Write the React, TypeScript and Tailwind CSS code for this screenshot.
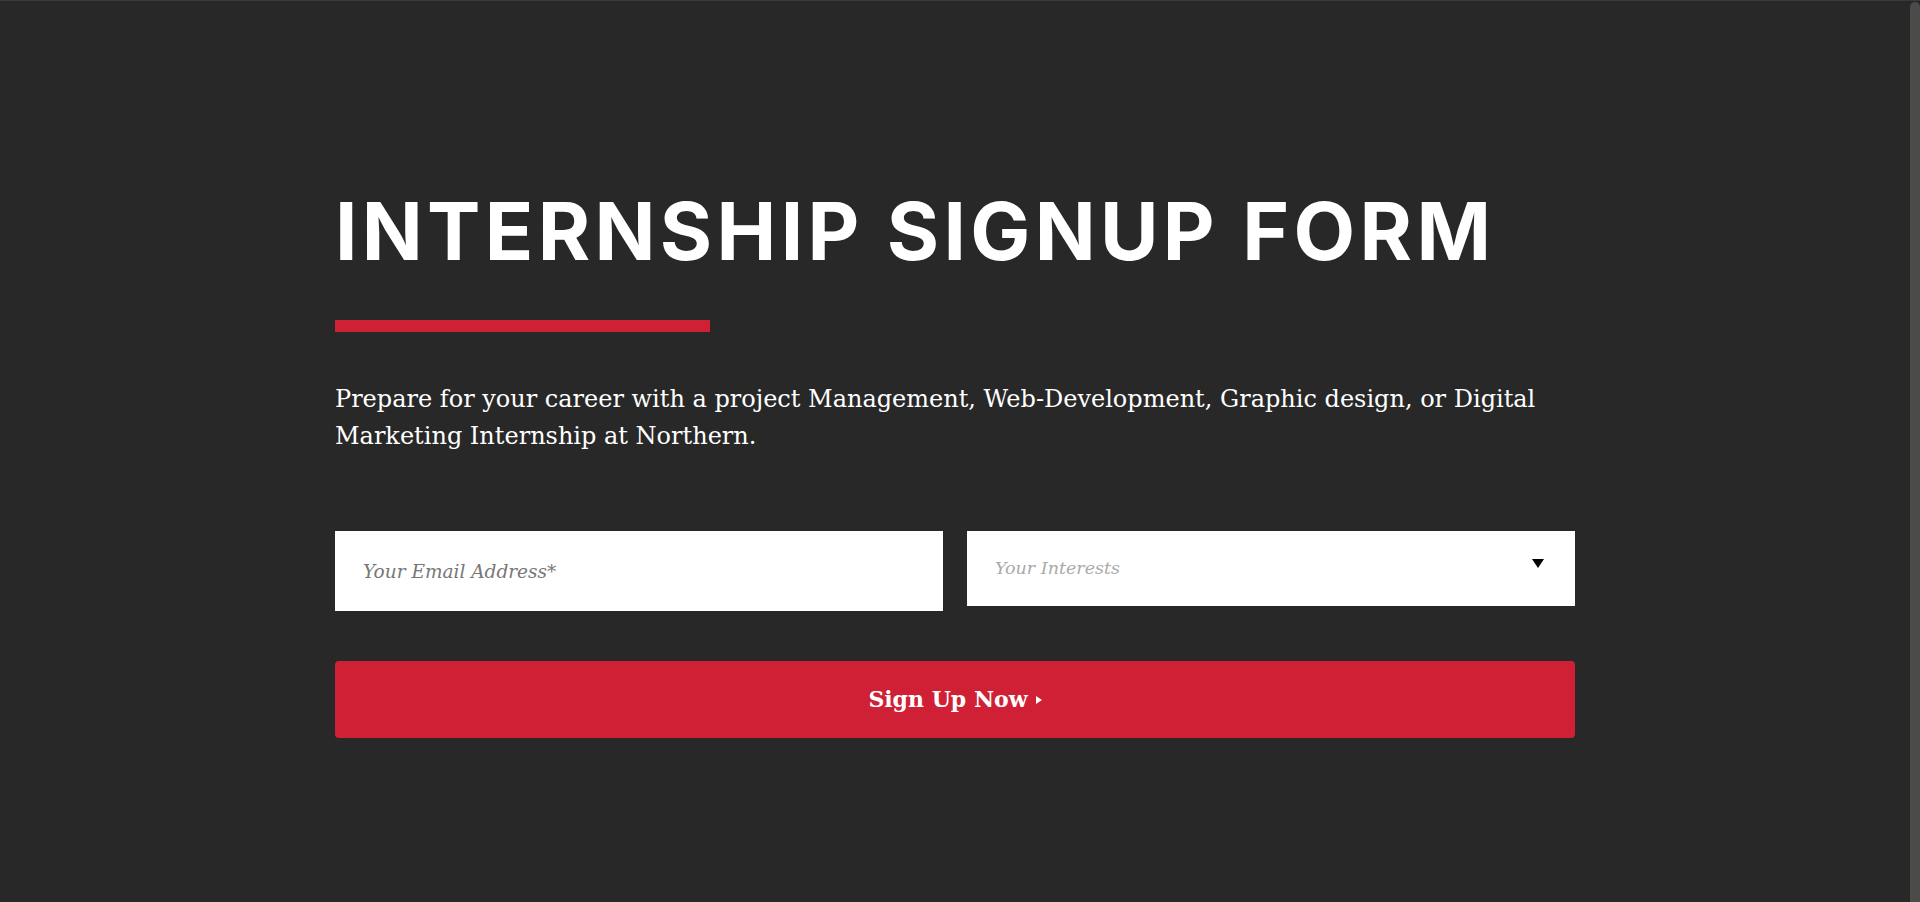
import { useState } from "react"

const interests = ["Project Management", "Web-Development", "Graphic Design", "Digital Marketing"]

export default function App() {
  const [email, setEmail] = useState("")
  const [interest, setInterest] = useState("")

  return (
    <div className="flex h-[902px] w-full overflow-hidden border-t border-[#3a3a3a] bg-[#282828]">
      <main className="flex-1">
        <div className="mx-auto w-[1240px] pt-[190px]">
          <h1 className="font-['Inter',sans-serif] text-[80px] font-bold leading-none tracking-[0.054em] text-white">
            INTERNSHIP SIGNUP FORM
          </h1>
          <div className="mt-[49px] h-[12px] w-[375px] bg-[#cf2035]" />
          <p className="mt-[49px] w-[1240px] font-['DejaVu_Serif',serif] text-[24px] leading-[37px] text-white">
            Prepare for your career with a project Management, Web-Development, Graphic design, or Digital Marketing
            Internship at Northern.
          </p>

          <form className="mt-[76px]" onSubmit={(e) => e.preventDefault()}>
            <div className="grid grid-cols-2 items-start gap-6">
              <input
                type="email"
                value={email}
                onChange={(e) => setEmail(e.target.value)}
                placeholder="Your Email Address*"
                className="h-[80px] w-full bg-white px-7 font-['DejaVu_Serif',serif] text-[18.5px] italic text-[#333] outline-none placeholder:text-[#777]"
              />
              <label className="relative block h-[75px] bg-white">
                <select
                  value={interest}
                  onChange={(e) => setInterest(e.target.value)}
                  className="h-full w-full appearance-none bg-transparent px-7 font-['DejaVu_Serif',serif] text-[17.5px] italic text-[#aaa] outline-none"
                >
                  <option value="">Your Interests</option>
                  {interests.map((i) => (
                    <option key={i} value={i}>
                      {i}
                    </option>
                  ))}
                </select>
                <span className="pointer-events-none absolute right-[31px] top-[28px] h-0 w-0 border-x-[6px] border-t-[9px] border-x-transparent border-t-black" />
              </label>
            </div>

            <button
              type="submit"
              className="mt-[50px] flex h-[77px] w-full items-center justify-center gap-2 rounded-[4px] bg-[#cf2035] font-['DejaVu_Serif',serif] text-[22px] font-bold text-white"
            >
              Sign Up Now
              <span className="h-0 w-0 border-y-[4px] border-l-[6px] border-y-transparent border-l-white" />
            </button>
          </form>
        </div>
      </main>
      <div className="w-[10px] shrink-0 pt-[1px]">
        <div className="h-full rounded-t-full bg-[#4b4b49]" />
      </div>
    </div>
  )
}
